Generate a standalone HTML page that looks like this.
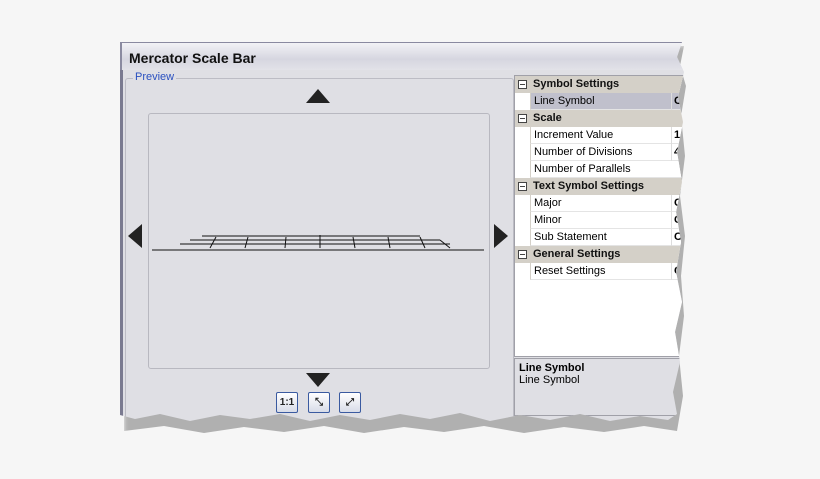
<!DOCTYPE html>
<html><head><style>
body{margin:0;width:820px;height:479px;background:#f6f6f6;position:relative;overflow:hidden;font-family:"Liberation Sans",sans-serif;}
.shadow{position:absolute;left:124px;top:46px;width:566px;height:392px;background:#b0b0b0;filter:blur(2px);
clip-path:polygon(0 0,560px 0,556px 20px,562px 40px,557px 70px,561px 110px,556px 150px,561px 190px,557px 230px,560px 270px,555px 310px,559px 350px,553px 385px,520px 380px,480px 386px,440px 381px,400px 387px,360px 380px,320px 386px,280px 381px,240px 387px,200px 380px,160px 386px,120px 381px,80px 387px,40px 380px,0 385px);}
.win{position:absolute;left:120px;top:42px;width:566px;height:392px;background:#dfdfe4;border-top-left-radius:4px;
clip-path:polygon(0 0,562px 0,557px 15px,564px 30px,558px 55px,563px 80px,557px 110px,562px 140px,556px 170px,561px 200px,556px 230px,562px 260px,555px 290px,560px 320px,553px 350px,557px 372px,548px 378px,520px 374px,490px 379px,460px 372px,430px 378px,400px 373px,370px 379px,340px 371px,310px 377px,280px 372px,250px 378px,220px 373px,190px 379px,160px 372px,130px 377px,100px 373px,70px 379px,40px 372px,15px 377px,0 373px);}
.title{position:absolute;left:0;top:0;width:100%;height:28px;background:linear-gradient(#f2f2f6,#d6d6e0 60%,#e2e2e8);border-top:1px solid #8a8aa0;border-left:2px solid #8a8aa0;box-sizing:border-box;font-weight:bold;font-size:14px;padding:7px 0 0 7px;color:#111;}
.lb{position:absolute;left:0;top:28px;width:3px;height:360px;background:#7a7a90}
.grp{position:absolute;left:5px;top:36px;width:387px;height:345px;border:1px solid #bcbcc4;border-radius:3px}
.grp span{position:absolute;left:7px;top:-8px;background:#dfdfe4;color:#2a50c0;font-size:11px;padding:0 2px}
.pv{position:absolute;left:28px;top:71px;width:340px;height:254px;border:1px solid #b8b8c0;border-radius:3px}
.tri{position:absolute;width:0;height:0}
.btn{position:absolute;top:350px;width:20px;height:19px;border:1px solid #3a5aa0;border-radius:2px;background:linear-gradient(#fff,#d8dce8);font-size:10px;font-weight:bold;text-align:center;line-height:19px;color:#222}
.pg{position:absolute;left:394px;top:33px;width:180px;height:280px;background:#fff;border:1px solid #a0a0a8}
.row{height:17px;font-size:11px;line-height:17px;position:relative}
.h{background:#d4d0c8;font-weight:bold;padding-left:18px;color:#111}
.h:before{content:"";position:absolute;left:3px;top:4px;width:7px;height:7px;border:1px solid #444;background:#fff}
.h:after{content:"";position:absolute;left:5px;top:8px;width:5px;height:1px;background:#444}
.r{background:#fff;margin-left:15px;padding-left:3px;border-bottom:1px solid #e4e4e4;box-sizing:border-box;border-left:1px solid #d4d0c8}
.r b{position:absolute;left:140px;top:0;border-left:1px solid #ddd;padding-left:2px}
.desc{position:absolute;left:394px;top:316px;width:180px;height:58px;border:1px solid #a0a0a8;font-size:11px;padding:3px 4px;box-sizing:border-box}
</style></head><body>
<div class="shadow"></div>
<div class="win">
<div class="title">Mercator Scale Bar</div>
<div class="lb"></div>
<div class="grp"><span>Preview</span></div>
<div class="pv"></div>
<div class="tri" style="left:186px;top:47px;border-left:12px solid transparent;border-right:12px solid transparent;border-bottom:14px solid #222"></div>
<div class="tri" style="left:186px;top:331px;border-left:12px solid transparent;border-right:12px solid transparent;border-top:14px solid #222"></div>
<div class="tri" style="left:8px;top:182px;border-top:12px solid transparent;border-bottom:12px solid transparent;border-right:14px solid #222"></div>
<div class="tri" style="left:374px;top:182px;border-top:12px solid transparent;border-bottom:12px solid transparent;border-left:14px solid #222"></div>
<svg style="position:absolute;left:30px;top:190px" width="336" height="20"><path d="M2 18H334M30 12H300M40 8H290M52 4H270M60 16L66 5M95 16L98 5M135 16L136 5M170 16V3M205 16L203 5M240 16L238 5M275 16L270 5M300 16L290 8" stroke="#111" stroke-width="1" fill="none"/></svg>
<div class="btn" style="left:156px">1:1</div>
<div class="btn" style="left:188px">⤡</div>
<div class="btn" style="left:219px">⤢</div>
<div class="pg">
<div class="row h">Symbol Settings</div>
<div class="row r" style="background:#c0c0cc">Line Symbol<b>C</b></div>
<div class="row h">Scale</div>
<div class="row r">Increment Value<b>1</b></div>
<div class="row r">Number of Divisions<b>4</b></div>
<div class="row r">Number of Parallels<b></b></div>
<div class="row h">Text Symbol Settings</div>
<div class="row r">Major<b>Cl</b></div>
<div class="row r">Minor<b>Cl</b></div>
<div class="row r">Sub Statement<b>Cl</b></div>
<div class="row h">General Settings</div>
<div class="row r">Reset Settings<b>Cl</b></div>
</div>
<div class="desc"><b>Line Symbol</b><br>Line Symbol</div>
</div>
</body></html>
